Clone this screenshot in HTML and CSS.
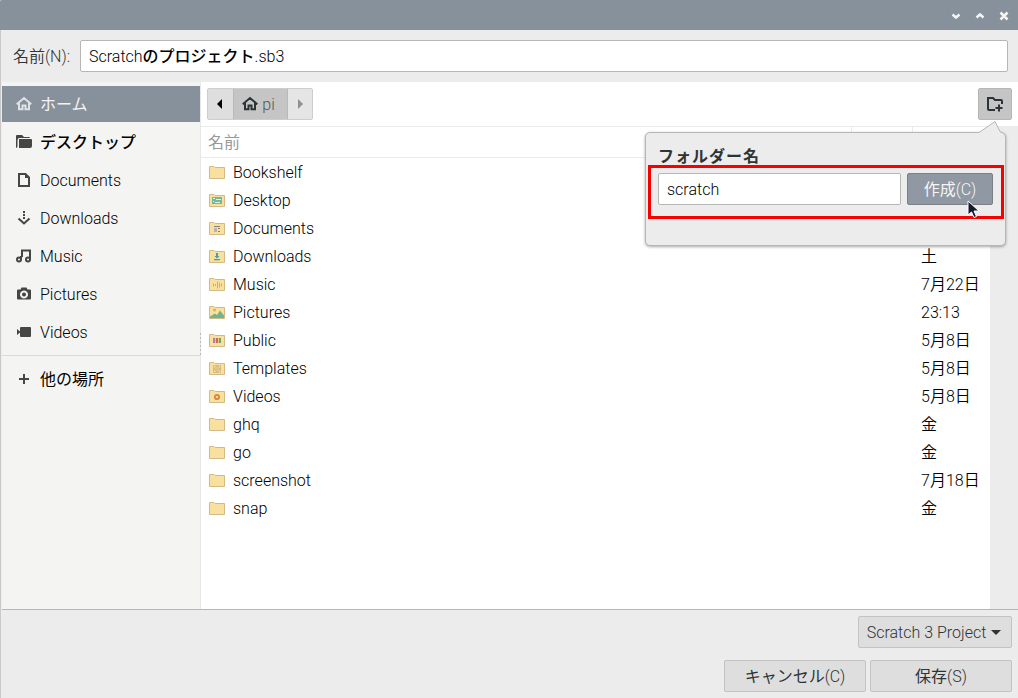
FILE: index.html
```
<!DOCTYPE html>
<html lang="ja">
<head>
<meta charset="utf-8">
<title>Save</title>
<link rel="stylesheet" href="styles.css">
</head>
<body>
<svg class="defs" width="0" height="0">
  <defs>
    <symbol id="home" viewBox="0 0 16 16"><path d="M.7 8.2 8 2l7.300 6.200M3 7v6.200h3.500V9.500h3v3.700H13V7" fill="none" stroke="currentColor" stroke-width="2"/></symbol>
    <symbol id="folder" viewBox="0 0 16 16"><path d="M.5 14.500V2.500H5l1 1h9.500v11z" fill="#f8e19e" stroke="#d3bb88"/></symbol>
  </defs>
</svg>
<div class="window">
  <header class="titlebar">
    <svg width="62" height="12" viewBox="0 0 62 12" fill="none" stroke="#f4f4f4" stroke-width="2.500"><path d="m2.500 5.500 3.500 3 3.500-3M26.500 8.500 30 5.500l3.500 3M50.500 3.500l7 7M57.500 3.500l-7 7"/></svg>
  </header>
  <div class="name-row"><label>名前(N):</label><div class="entry filename">Scratch<span class="kana">のプロジェクト</span>.sb3</div></div>
  <div class="content">
    <nav class="sidebar">
      <div class="place selected"><svg class="icon"><use href="#home"/></svg><span class="jp">ホーム</span></div>
      <div class="place"><svg class="icon" viewBox="0 0 16 16"><path d="M0 2q0-1 1-1h5l2 2h5q1 0 1 1H2.500L1.500 6v6L1 14q-1 0-1-1zM3 5h12q1 0 1 1v6q0 2-2 2H3z" fill="currentColor"/></svg><span class="kana">デスクトップ</span></div>
      <div class="place"><svg class="icon" viewBox="0 0 16 16"><path d="M3 2h6.500L13 5.500V14H3z" fill="none" stroke="currentColor" stroke-width="2"/><path d="M9 2v4h4z" fill="currentColor"/></svg>Documents</div>
      <div class="place"><svg class="icon" viewBox="0 0 16 16" fill="none" stroke="currentColor" stroke-width="2"><path d="M8 1v9" stroke-dasharray="2 1"/><path d="M2.500 8.500 8 13.500l5.500-5"/></svg>Downloads</div>
      <div class="place"><svg class="icon" viewBox="0 0 16 16" fill="none" stroke="currentColor" stroke-width="2"><circle cx="3" cy="11.500" r="2"/><circle cx="12" cy="11.500" r="2"/><path d="M5 11.500V9M6 9V2.500h8v9M5 8v3.500"/></svg>Music</div>
      <div class="place"><svg class="icon" viewBox="0 0 16 16"><path fill-rule="evenodd" d="M2 3.500h2.500l1-2h5l1 2H14q1 0 1 1v8q0 1-1 1H2q-1 0-1-1v-8q0-1 1-1zM8 4.500a4 4 0 1 0 .01 0zM8 6.500a2 2 0 1 1-.01 0z" fill="currentColor"/></svg>Pictures</div>
      <div class="place"><svg class="icon" viewBox="0 0 16 16"><path d="M1 5l3 2.500V4q0-1 1-1h9q1 0 1 1v8q0 1-1 1H5q-1 0-1-1V8.500L1 11z" fill="currentColor"/></svg>Videos</div>
      <div class="separator"></div>
      <div class="place"><svg class="icon" viewBox="0 0 16 16"><path d="M8 3v10M3 8h10" stroke="currentColor" stroke-width="2"/></svg><span class="jp">他の場所</span></div>
    </nav>
    <div class="grip"></div>
    <main class="browser">
      <div class="pathbar">
        <div class="crumbs">
          <span class="crumb back"><svg width="5" height="10"><path d="M5 0v10L0 5z"/></svg></span>
          <span class="crumb current"><svg class="icon"><use href="#home"/></svg>pi</span>
          <span class="crumb next"><svg width="5" height="10"><path d="M0 0v10l5-5z" fill="#8e9192"/></svg></span>
        </div>
        <div class="new-folder"><svg width="18" height="18" viewBox="0 0 18 18" fill="none" stroke="#2e3436" stroke-width="2"><path d="M9 15H3q-1 0-1-1V3h5l2 2h6q1 0 1 1v3M13 9.500v7M9.500 13h7"/></svg></div>
      </div>
      <div class="listing">
        <div class="files">
          <div class="head"><span>名前</span><span></span><span></span></div>
          <div class="file"><svg class="icon"><use href="#folder"/></svg><span>Bookshelf</span></div>
          <div class="file"><svg class="icon" viewBox="0 0 16 16"><use href="#folder"/><path d="M3 5h10v7H3z" fill="#72b9a0"/><path d="M4 6.500h2M7 7.500h5M4 9.500h1M6 10.500h5" stroke="#e3f0dc"/></svg><span>Desktop</span></div>
          <div class="file"><svg class="icon" viewBox="0 0 16 16"><use href="#folder"/><path d="M5 6.500h6M9 8.500h2M9 11.500h2" stroke="#8b7f74"/><path d="M5 8h3v4H5z" fill="#b9b3ae"/></svg><span>Documents</span></div>
          <div class="file"><svg class="icon" viewBox="0 0 16 16"><use href="#folder"/><path d="M7 5h2v3h1.500L8 10.500 5.500 8H7zM5 11h6v1.200H5z" fill="#41a1b4"/></svg><span>Downloads</span><time>土</time></div>
          <div class="file"><svg class="icon" viewBox="0 0 16 16"><use href="#folder"/><path d="M4.500 7.500v3M6.500 8v2M8.500 5.500v7M10.500 6.500v5M12.500 7.500v3" stroke="#d6a0a0"/></svg><span>Music</span><time>7月22日</time></div>
          <div class="file"><svg class="icon" viewBox="0 0 16 16"><use href="#folder"/><path d="m1 12.500 5-3 2 1.500 3-4.500 4 5V14H1z" fill="#74b291"/><circle cx="5.500" cy="6" r="1.500" fill="#e7ac54"/></svg><span>Pictures</span><time>23:13</time></div>
          <div class="file"><svg class="icon" viewBox="0 0 16 16"><use href="#folder"/><path d="M4 6h2.300v5H4z" fill="#b77cab"/><path d="M7 6h2v5H7z" fill="#d4684c"/><path d="M9.700 6H12v5H9.700z" fill="#839d68"/></svg><span>Public</span><time>5月8日</time></div>
          <div class="file"><svg class="icon" viewBox="0 0 16 16"><use href="#folder"/><path d="M4.500 5.500h7v7h-7zM4.500 9h7M8 5.500v7" fill="none" stroke="#cbb680" stroke-width=".8"/><circle cx="8" cy="9" r="2.500" fill="none" stroke="#c6ad72" stroke-width=".8"/></svg><span>Templates</span><time>5月8日</time></div>
          <div class="file"><svg class="icon" viewBox="0 0 16 16"><use href="#folder"/><circle cx="8" cy="9" r="2.100" fill="#f8e4ba" stroke="#dc8a43" stroke-width="2"/></svg><span>Videos</span><time>5月8日</time></div>
          <div class="file"><svg class="icon"><use href="#folder"/></svg><span>ghq</span><time>金</time></div>
          <div class="file"><svg class="icon"><use href="#folder"/></svg><span>go</span><time>金</time></div>
          <div class="file"><svg class="icon"><use href="#folder"/></svg><span>screenshot</span><time>7月18日</time></div>
          <div class="file"><svg class="icon"><use href="#folder"/></svg><span>snap</span><time>金</time></div>
        </div>
        <div class="gutter"></div>
      </div>
    </main>
  </div>
  <footer class="footer">
    <div class="button filter">Scratch 3 Project<svg width="10" height="5"><path d="M0 0h10L5 5z" fill="#2e3436"/></svg></div>
    <div class="actions"><div class="button"><span class="jp">キャンセル</span>(C)</div><div class="button"><span class="jp">保存</span>(S)</div></div>
  </footer>
</div>
<section class="popover">
  <svg class="arrow" width="24" height="13" viewBox="0 0 24 13"><path d="M0 12 17 .5 22 11l2 1v1H0z" fill="#ececec"/><path d="M0 11.500h1L17 .500l5 10 2 1" fill="none" stroke="#b6b6b3"/></svg>
  <h2>フォルダー名</h2>
  <div class="create"><div class="entry">scratch</div><div class="button primary"><span class="jp">作成</span>(C)</div></div>
  <svg class="cursor" width="14" height="20" viewBox="0 0 14 20"><path d="M1 1v14l3.500-3 2.500 5.500 2.500-1L7 11h5z" fill="#151a30" stroke="#fff"/></svg>
</section>
</body>
</html>
```
FILE: styles.css
```
*, *::after { box-sizing: border-box; }
body { margin: 0; font: 300 16px/20px Roboto, "Noto Sans CJK JP", sans-serif; color: #000; }
.defs { position: absolute; }
.window { height: 698px; display: flex; flex-direction: column; background: #ececec; border-left: 1px solid #c9c9c9; }
.titlebar { height: 30px; margin-left: -1px; background: #87919b; display: flex; justify-content: flex-end; padding: 9px 6px 0 0; border-top-left-radius: 2px; }
.name-row { height: 52px; display: flex; align-items: center; padding: 0 10px 0 12px; color: #2e3436; }
.name-row label { width: 67px; padding-top: 2px; font-weight: 350; white-space: nowrap; }
.entry { height: 32px; flex: 1; background: #fff; border: 1px solid #b6b6b3; border-radius: 2px; padding: 6px 8px 4px; color: #000; white-space: nowrap; }
.jp { font-weight: 400; }
.kana { font-weight: 500; }
.content { height: 527px; display: flex; padding-left: 1px; }
.sidebar { width: 198px; background: #f4f4f2; padding-top: 4px; display: flex; flex-direction: column; gap: 2px; }
.place { height: 36px; display: flex; align-items: center; gap: 8px; padding: 2px 0 0 14px; }
.icon { width: 16px; height: 16px; flex: none; }
.place .icon { color: #464646; margin-bottom: 2px; }
.place.selected { background: #87919b; color: #f3f3f3; }
.place.selected .icon { color: #dfe2e5; }
.separator { height: 1px; background: #dadad8; margin: 3px 0; }
.grip { width: 1px; background: repeating-linear-gradient(#b8b8b8 0 2px, #e8e8e8 2px 4px) 0 251px / 1px 24px no-repeat #e8e8e8; }
.browser { flex: 1; display: flex; flex-direction: column; background: #fff; }
.pathbar { height: 44px; display: flex; justify-content: space-between; align-items: center; padding: 0 6px; }
.crumbs { display: flex; height: 32px; border: 1px solid #cdcdcd; border-radius: 2px; }
.crumb { display: flex; align-items: center; justify-content: center; background: #dedede; width: 25px; }
.crumb.back { padding-right: 2px; }
.crumb.current { width: 55px; gap: 4px; padding: 2px 4px 0 0; background: #c5c5c5; border: solid #b9b9b9; border-width: 0 1px; color: #50575a; }
.crumb .icon { color: #2e3436; margin-bottom: 2px; }
.crumb.next { width: 24px; background: #e5e5e5; }
.new-folder { width: 34px; height: 32px; display: flex; align-items: center; justify-content: center; background: #c5c5c5; border: 1px solid #b6b6b3; border-radius: 2px; }
.listing { flex: 1; display: flex; }
.files { flex: 1; border-top: 1px solid #ebebeb; }
.head { height: 31px; display: grid; grid-template-columns: 651px 61px 1fr; border-bottom: 1px solid #ebebeb; color: #999; font-weight: 400; }
.head span { padding: 6px 7px 4px; border-right: 1px solid #ebebeb; }
.head span:last-child { border: 0; }
.file { height: 28px; display: grid; grid-template-columns: 16px 688px 1fr; column-gap: 8px; align-items: center; padding: 2px 0 0 8px; }
.file .icon { margin-bottom: 2px; }
.file time { margin-left: -8px; white-space: nowrap; font-weight: 350; }
.gutter { width: 28px; background: #ececec; }
.footer { flex: 1; border-top: 1px solid #b6b6b3; margin-left: 1px; padding: 6px 6px 0; display: flex; flex-direction: column; align-items: flex-end; gap: 12px; }
.button { height: 32px; width: 142px; display: flex; align-items: center; justify-content: center; padding-top: 2px; background: #dedede; border: 1px solid #c3c3c3; border-radius: 2px; color: #2e3436; white-space: nowrap; }
.filter { width: 154px; gap: 5px; padding-right: 2px; }
.filter svg { margin-bottom: 2px; }
.actions { display: flex; gap: 4px; }
.popover { position: absolute; left: 645px; top: 132px; width: 361px; height: 114px; background: #ececec; border: 1px solid #b6b6b3; border-radius: 5px; box-shadow: 0 1px 3px #0005; padding: 14px 12px; }
.popover h2 { margin: 0; font-size: 16px; line-height: 20px; font-weight: 700; color: #2e3436; letter-spacing: 1px; }
.arrow { position: absolute; left: 332px; top: -12px; }
.create { display: flex; gap: 6px; margin-top: 6px; }
.create::after { content: ""; position: absolute; left: 2px; top: 32px; width: 356px; height: 54px; border: 3px solid #f60000; }
.primary { width: 86px; background: #9098a3; border-color: #7b8087; color: #f5f5f5; }
.cursor { position: absolute; left: 321px; top: 67px; z-index: 1; }
```
